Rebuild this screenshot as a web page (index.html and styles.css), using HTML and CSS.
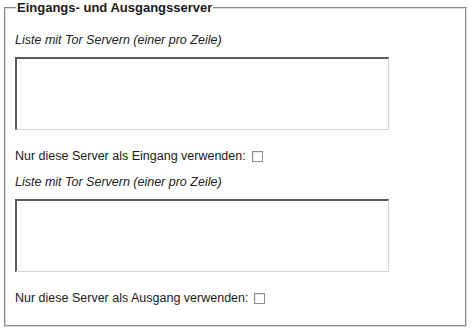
FILE: index.html
```html
<!DOCTYPE html>
<html lang="de">
<head>
  <meta charset="UTF-8">
  <title>Eingangs- und Ausgangsserver</title>
  <link rel="stylesheet" href="styles.css">
</head>
<body>
<fieldset class="servers">
  <legend>Eingangs- und Ausgangsserver</legend>

  <div class="hint">Liste mit Tor Servern (einer pro Zeile)</div>
  <textarea class="serverlist"></textarea>
  <label class="only">Nur diese Server als Eingang verwenden: <input type="checkbox"></label>

  <div class="hint">Liste mit Tor Servern (einer pro Zeile)</div>
  <textarea class="serverlist"></textarea>
  <label class="only">Nur diese Server als Ausgang verwenden: <input type="checkbox"></label>
</fieldset>
</body>
</html>
```

FILE: styles.css
```css
body {
  margin: 0;
  background: #ffffff;
  font-family: "Liberation Sans", Arial, sans-serif;
  font-size: 12.5px;
  color: #1a1a1a;
}
.servers {
  margin: 0 5px 0 4px;
  padding: 18px 9px 19px 9px;
  height: 327px;
  box-sizing: border-box;
  border: 2px groove #dcdcdc;
}
.servers legend {
  font-weight: bold;
  font-size: 13px;
  padding: 0 1px;
  margin-left: 1px;
  line-height: 15px;
}
.hint {
  font-style: italic;
  line-height: 14px;
  color: #222;
}
.serverlist {
  display: block;
  width: 374px;
  height: 73px;
  box-sizing: border-box;
  margin: 10px 0 0 0;
  resize: none;
  border-style: solid;
  border-width: 2px 1px 1px 2px;
  border-color: #5a5a5a #d4d4d4 #d4d4d4 #5a5a5a;
  background: #fff;
}
.only {
  display: flex;
  align-items: center;
  line-height: 14px;
  margin: 19px 0 12px 0;
}
.only input {
  appearance: none;
  width: 11px;
  height: 11px;
  margin: 0 0 0 6px;
  border: 1px solid #8c8c8c;
  box-shadow: inset 1px 1px 0 #e8e8e8;
  background: #fff;
}
```
